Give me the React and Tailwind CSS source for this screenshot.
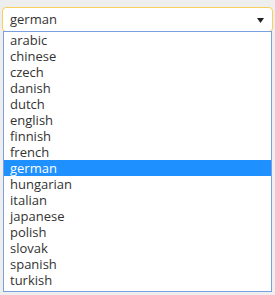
const languages = [
  'arabic', 'chinese', 'czech', 'danish', 'dutch', 'english', 'finnish', 'french',
  'german', 'hungarian', 'italian', 'japanese', 'polish', 'slovak', 'spanish', 'turkish',
];

const App = () => {
  const selected = 'german';
  return (
    <div className="w-[275px] h-[295px] bg-[#eeeeee] pt-[7px] font-['Open_Sans',sans-serif] text-[13px] text-[#333]">
      <div className="ml-[2px] w-[271px] h-[25px] bg-white border border-[#f7cf5c] rounded-[4px] flex items-center justify-between pl-[7px] pr-[8px]">
        <span className="leading-none">{selected}</span>
        <svg width="7" height="5" viewBox="0 0 7 5" className="mt-[1px]">
          <path d="M0 0 H7 L3.5 5 Z" fill="#222" />
        </svg>
      </div>
      <ul className="ml-[3px] w-[269px] h-[261px] bg-white border border-[#7b9fdf] -mt-[1px]">
        {languages.map(lang => (
          <li
            key={lang}
            className={`h-[16px] leading-[16px] pl-[6px] ${lang === selected ? 'bg-[#1e90ff] text-white' : ''}`}
          >
            {lang}
          </li>
        ))}
      </ul>
    </div>
  );
};

export default App;
